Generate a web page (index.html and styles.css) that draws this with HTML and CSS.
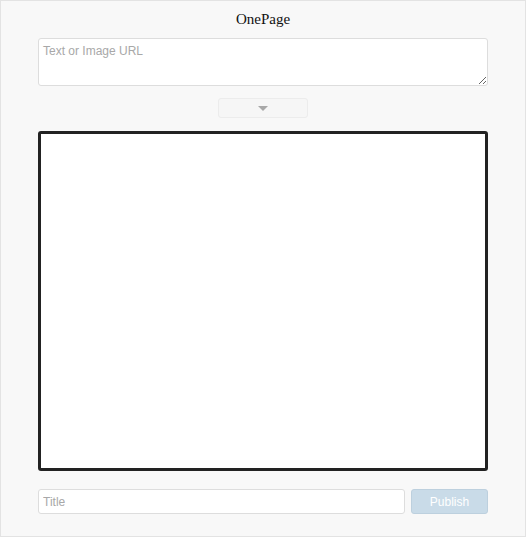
FILE: index.html
```html
<!DOCTYPE html>
<html>
<head>
<meta charset="utf-8">
<link rel="stylesheet" href="styles.css">
</head>
<body>
<div class="page">
  <h1 class="title">OnePage</h1>
  <textarea class="source" placeholder="Text or Image URL"></textarea>
  <div class="toggle-row">
    <button class="toggle"><span class="caret"></span></button>
  </div>
  <div class="canvas"></div>
  <div class="publish-row">
    <input class="title-input" type="text" placeholder="Title">
    <button class="publish">Publish</button>
  </div>
</div>
</body>
</html>
```
FILE: styles.css
```css
html, body {
  margin: 0;
  padding: 0;
}
body {
  width: 526px;
  height: 537px;
  font-family: "Liberation Sans", Arial, sans-serif;
}
.page {
  box-sizing: border-box;
  width: 526px;
  height: 537px;
  border: 1px solid #e3e3e3;
  background: #f8f8f8;
  display: flex;
  flex-direction: column;
  align-items: center;
}
.title {
  margin: 9px 0 0;
  height: 28px;
  font-family: "Liberation Serif", "Times New Roman", serif;
  font-weight: normal;
  font-size: 15px;
  line-height: 18px;
  color: #111;
}
.source {
  box-sizing: border-box;
  width: 450px;
  height: 48px;
  margin: 0;
  padding: 5px 4px;
  border: 1px solid #ddd;
  border-radius: 3px;
  background: #fff;
  font-family: "Liberation Sans", Arial, sans-serif;
  font-size: 12px;
  color: #333;
  display: block;
}
.source::placeholder,
.title-input::placeholder {
  color: #a8a8a8;
}
.toggle-row {
  margin-top: 12px;
  display: flex;
  justify-content: center;
}
.toggle {
  box-sizing: border-box;
  width: 90px;
  height: 20px;
  border: 1px solid #ececec;
  border-radius: 3px;
  background: #f6f6f6;
  padding: 0;
  display: flex;
  align-items: center;
  justify-content: center;
}
.caret {
  width: 0;
  height: 0;
  border-left: 5px solid transparent;
  border-right: 5px solid transparent;
  border-top: 5px solid #a8a8a8;
  margin-top: 1px;
}
.canvas {
  box-sizing: border-box;
  width: 450px;
  height: 340px;
  margin-top: 13px;
  border: 3px solid #222;
  border-radius: 3px;
  background: #fff;
}
.publish-row {
  width: 450px;
  margin-top: 18px;
  display: flex;
  gap: 6px;
}
.title-input {
  box-sizing: border-box;
  flex: 1;
  height: 25px;
  margin: 0;
  padding: 0 4px;
  border: 1px solid #ddd;
  border-radius: 3px;
  background: #fff;
  font-family: "Liberation Sans", Arial, sans-serif;
  font-size: 12px;
  outline: none;
}
.publish {
  box-sizing: border-box;
  width: 77px;
  height: 25px;
  margin: 0;
  padding: 0;
  border: 1px solid #bdd0de;
  border-radius: 3px;
  background: #c9dbe8;
  color: #ffffff;
  font-family: "Liberation Sans", Arial, sans-serif;
  font-size: 12px;
}
```
